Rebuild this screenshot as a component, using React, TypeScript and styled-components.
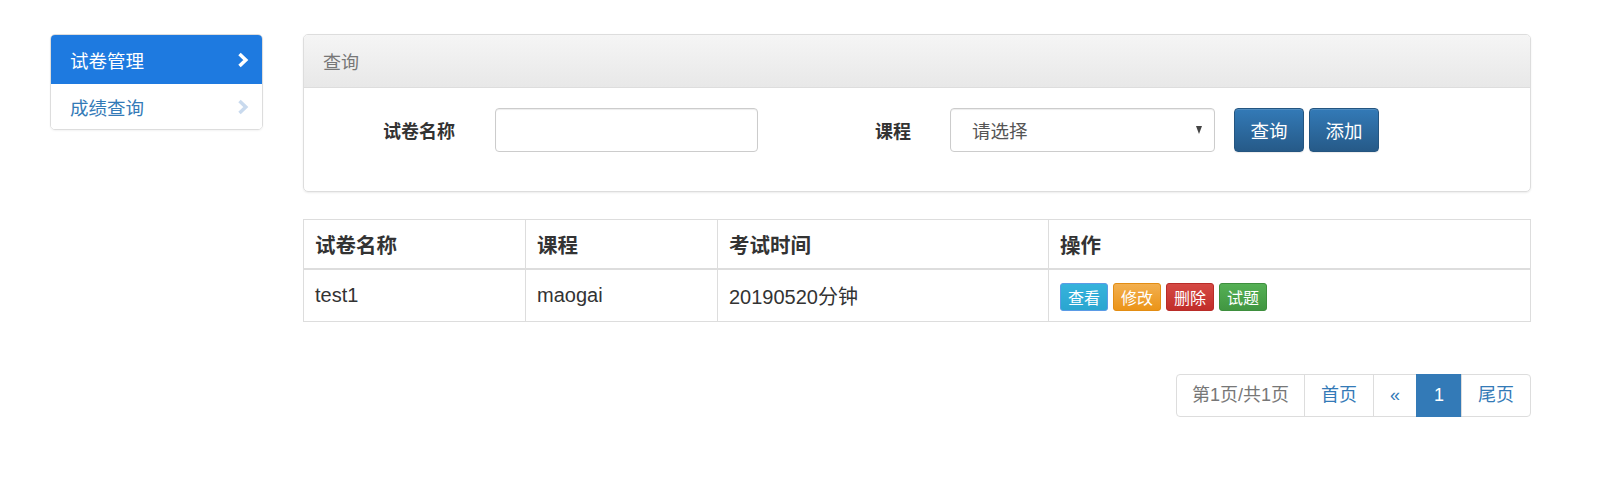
import React from 'react'
import styled, { createGlobalStyle, css } from 'styled-components'

const GlobalStyle = createGlobalStyle`
  html, body {
    margin: 0;
    padding: 0;
    background: #fff;
  }
  body {
    font-family: 'Liberation Sans', 'Noto Sans CJK SC', sans-serif;
    color: #333;
    font-size: 17.5px;
  }
  * {
    box-sizing: border-box;
  }
`

const Page = styled.div`
  display: flex;
  align-items: flex-start;
  gap: 40px;
  padding: 34px 0 0 50px;
`

const SideNav = styled.div`
  width: 213px;
  border: 1px solid #ddd;
  border-radius: 5px;
  overflow: hidden;
  box-shadow: 0 1px 2px rgba(0, 0, 0, 0.05);
`

const NavItem = styled.a<{ $active?: boolean }>`
  display: flex;
  align-items: center;
  justify-content: space-between;
  padding: 0 13px 0 19px;
  font-size: 18.5px;
  text-decoration: none;
  cursor: pointer;
  ${({ $active }) =>
    $active
      ? css`
          height: 49px;
          background: #1e7ae0;
          color: #fff;
        `
      : css`
          height: 45px;
          background: #fff;
          color: #337ab7;
        `}
`

const Chevron = ({ color }: { color: string }) => (
  <svg width="12" height="16" viewBox="0 0 12 16">
    <polyline points="2.5,2 8.8,8 2.5,14" fill="none" stroke={color} strokeWidth="3.5" />
  </svg>
)

const Main = styled.div`
  width: 1228px;
  display: flex;
  flex-direction: column;
`

const Panel = styled.div`
  border: 1px solid #ddd;
  border-radius: 5px;
  box-shadow: 0 1px 2px rgba(0, 0, 0, 0.08);
  overflow: hidden;
`

const PanelHeading = styled.div`
  height: 53px;
  display: flex;
  align-items: center;
  padding-left: 19px;
  font-size: 18px;
  color: #777;
  background: linear-gradient(to bottom, #f5f5f5 0%, #e8e8e8 100%);
  border-bottom: 1px solid #ddd;
`

const PanelBody = styled.div`
  display: flex;
  align-items: center;
  padding: 20px 0 39px 0;
`

const FieldLabel = styled.label<{ $width: number; $gap: number }>`
  width: ${({ $width }) => $width}px;
  padding-right: ${({ $gap }) => $gap}px;
  text-align: right;
  font-size: 18px;
  font-weight: bold;
  color: #333;
`

const TextInput = styled.input`
  width: 263px;
  height: 44px;
  border: 1px solid #ccc;
  border-radius: 4px;
  box-shadow: inset 0 1px 1px rgba(0, 0, 0, 0.075);
  font-size: 17.5px;
  padding: 0 15px;
  outline: none;
`

const Select = styled.div`
  width: 265px;
  height: 44px;
  border: 1px solid #ccc;
  border-radius: 4px;
  display: flex;
  align-items: center;
  justify-content: space-between;
  padding: 0 12px 0 21px;
  font-size: 18.5px;
  color: #555;
  box-shadow: inset 0 1px 1px rgba(0, 0, 0, 0.075);
`

const Caret = styled.span`
  width: 0;
  height: 0;
  border-left: 3.5px solid transparent;
  border-right: 3.5px solid transparent;
  border-top: 8px solid #444;
`

const PrimaryButton = styled.button<{ $ml: number }>`
  margin-left: ${({ $ml }) => $ml}px;
  width: 70px;
  height: 44px;
  padding: 0;
  font-family: inherit;
  font-size: 18.5px;
  color: #fff;
  background: linear-gradient(to bottom, #337ab7 0%, #265a88 100%);
  border: 1px solid #245580;
  border-radius: 4px;
  box-shadow: inset 0 1px 0 rgba(255, 255, 255, 0.15), 0 1px 1px rgba(0, 0, 0, 0.075);
  cursor: pointer;
`

const Table = styled.table`
  margin-top: 27px;
  width: 100%;
  table-layout: fixed;
  border-collapse: collapse;
  border: 1px solid #ddd;
`

const HeadCell = styled.th`
  height: 49px;
  padding: 0 11px;
  text-align: left;
  font-size: 20.5px;
  font-weight: bold;
  color: #333;
  border: 1px solid #ddd;
  border-bottom: 2px solid #ddd;
`

const Cell = styled.td`
  height: 53px;
  padding: 0 11px;
  font-size: 20px;
  color: #333;
  border: 1px solid #ddd;
`

const Actions = styled.div`
  display: flex;
  gap: 5px;
  padding-top: 3px;
`

const tones = {
  info: ['#36b3dc', '#2aa6d0', '#5b9be6'],
  warning: ['#f2af4f', '#eb9418', '#e38d13'],
  danger: ['#d54944', '#c12e2a', '#b92c28'],
  success: ['#55b055', '#419641', '#3e8f3e'],
}

const SmallButton = styled.button<{ $tone: keyof typeof tones }>`
  height: 28px;
  padding: 0 7px;
  font-family: inherit;
  font-size: 16px;
  color: #fff;
  border-radius: 3px;
  cursor: pointer;
  background: ${({ $tone }) => `linear-gradient(to bottom, ${tones[$tone][0]} 0%, ${tones[$tone][1]} 100%)`};
  border: 1px solid ${({ $tone }) => tones[$tone][2]};
`

const PagerRow = styled.div`
  display: flex;
  justify-content: flex-end;
  margin-top: 52px;
`

const Pager = styled.ul`
  display: flex;
  list-style: none;
  margin: 0;
  padding: 0;
`

const PageItem = styled.li<{ $active?: boolean; $muted?: boolean }>`
  height: 43px;
  line-height: 41px;
  padding: 0 16px;
  margin-left: -1px;
  font-size: 18px;
  border: 1px solid #ddd;
  color: ${({ $muted }) => ($muted ? '#777' : '#337ab7')};
  background: #fff;
  cursor: pointer;
  &:first-child {
    margin-left: 0;
    border-radius: 4px 0 0 4px;
    padding: 0 15px;
  }
  &:last-child {
    border-radius: 0 4px 4px 0;
  }
  ${({ $active }) =>
    $active &&
    css`
      background: #337ab7;
      border-color: #337ab7;
      color: #fff;
      padding: 0 17px;
    `}
`

const papers = [{ name: 'test1', course: 'maogai', time: '20190520分钟' }]

export default function App() {
  return (
    <>
      <GlobalStyle />
      <Page>
        <SideNav>
          <NavItem $active>
            试卷管理
            <Chevron color="#fff" />
          </NavItem>
          <NavItem>
            成绩查询
            <Chevron color="#c9daee" />
          </NavItem>
        </SideNav>

        <Main>
          <Panel>
            <PanelHeading>查询</PanelHeading>
            <PanelBody>
              <FieldLabel $width={191} $gap={40}>试卷名称</FieldLabel>
              <TextInput />
              <FieldLabel $width={192} $gap={39}>课程</FieldLabel>
              <Select>
                请选择
                <Caret />
              </Select>
              <PrimaryButton $ml={19}>查询</PrimaryButton>
              <PrimaryButton $ml={5}>添加</PrimaryButton>
            </PanelBody>
          </Panel>

          <Table>
            <colgroup>
              <col style={{ width: 222 }} />
              <col style={{ width: 192 }} />
              <col style={{ width: 331 }} />
              <col />
            </colgroup>
            <thead>
              <tr>
                <HeadCell>试卷名称</HeadCell>
                <HeadCell>课程</HeadCell>
                <HeadCell>考试时间</HeadCell>
                <HeadCell>操作</HeadCell>
              </tr>
            </thead>
            <tbody>
              {papers.map((p) => (
                <tr key={p.name}>
                  <Cell>{p.name}</Cell>
                  <Cell>{p.course}</Cell>
                  <Cell>{p.time}</Cell>
                  <Cell>
                    <Actions>
                      <SmallButton $tone="info">查看</SmallButton>
                      <SmallButton $tone="warning">修改</SmallButton>
                      <SmallButton $tone="danger">删除</SmallButton>
                      <SmallButton $tone="success">试题</SmallButton>
                    </Actions>
                  </Cell>
                </tr>
              ))}
            </tbody>
          </Table>

          <PagerRow>
            <Pager>
              <PageItem $muted>第1页/共1页</PageItem>
              <PageItem>首页</PageItem>
              <PageItem>«</PageItem>
              <PageItem $active>1</PageItem>
              <PageItem>尾页</PageItem>
            </Pager>
          </PagerRow>
        </Main>
      </Page>
    </>
  )
}
